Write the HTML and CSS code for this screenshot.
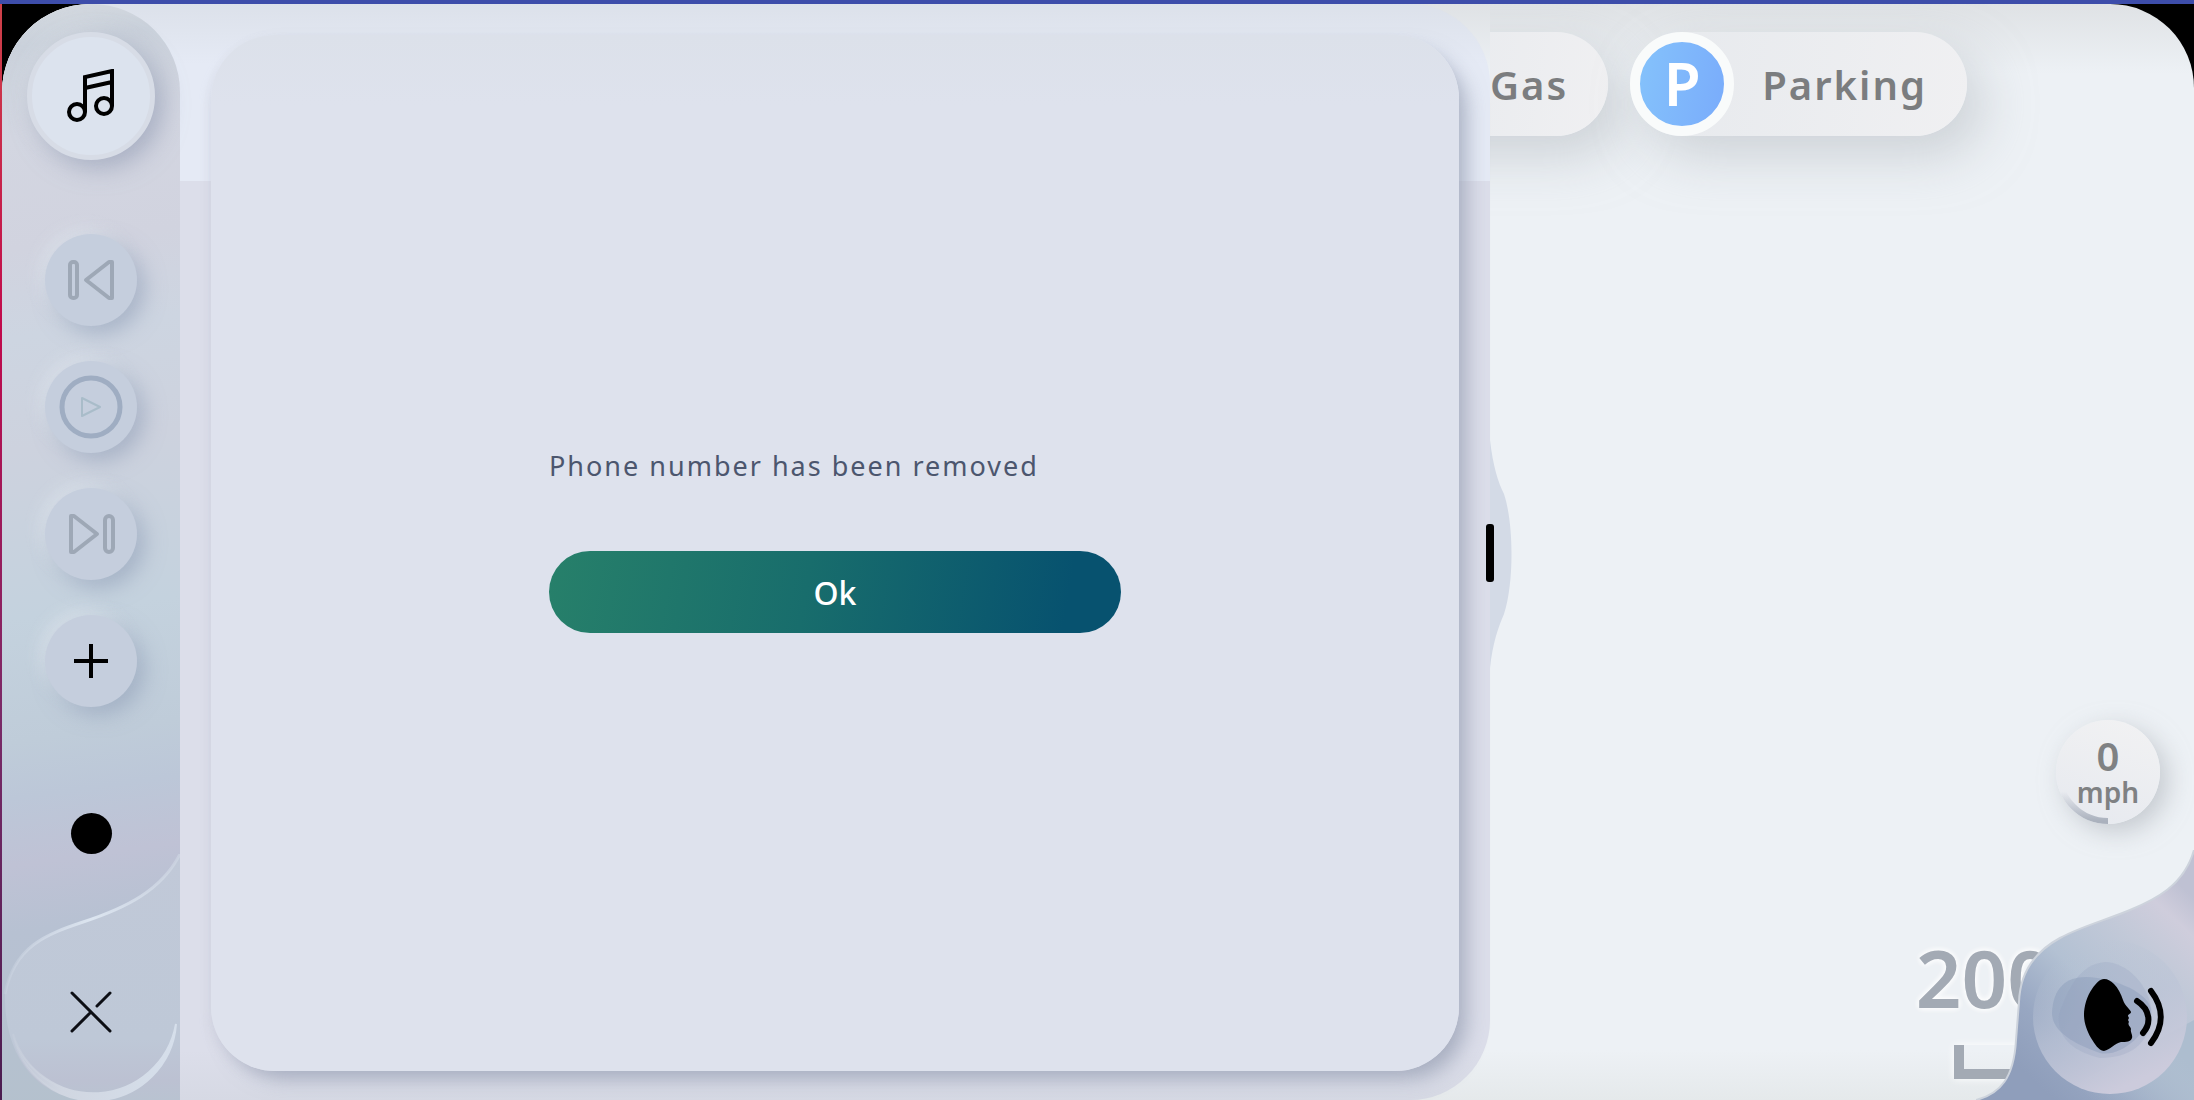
FILE: index.html
```html
<!DOCTYPE html>
<html lang="en">
<head>
  <meta charset="UTF-8" />
  <title>Phone</title>
  <meta name="viewport" content="width=device-width, initial-scale=1.0"/>
  <link rel="stylesheet" href="styles.css">
</head>
<body>
  <div class="screen">

    <!-- Media sidebar + panel -->
    <div class="drawer">
      <nav class="sidebar">
        <button class="round music" aria-label="Music">
          <svg width="48" height="54" viewBox="0 0 48 54" fill="none" stroke="#000" stroke-width="4">
            <circle cx="10" cy="43" r="8"/>
            <circle cx="37" cy="37" r="8"/>
            <path d="M18 43V8L45 2V37M18 19L45 13"/>
          </svg>
        </button>
        <button class="round" aria-label="Previous">
          <svg width="48" height="42" viewBox="0 0 48 42" fill="none" stroke="#9ea8b6" stroke-width="4" stroke-linejoin="round">
            <rect x="3" y="3" width="7" height="36" rx="3"/>
            <path d="M45 3V39H42L19 21L42 3Z"/>
          </svg>
        </button>
        <button class="round" aria-label="Play">
          <svg width="64" height="64" viewBox="0 0 64 64" fill="none" stroke-linejoin="round">
            <circle cx="32" cy="32" r="29" stroke="#9fadc2" stroke-width="5"/>
            <path d="M23 23L41 32L23 41Z" stroke="#a9bcc9" stroke-width="2"/>
          </svg>
        </button>
        <button class="round" aria-label="Next">
          <svg width="48" height="42" viewBox="0 0 48 42" fill="none" stroke="#9ea8b6" stroke-width="4" stroke-linejoin="round">
            <path d="M4 3V39H7L30 21L7 3Z"/>
            <rect x="38" y="3" width="8" height="36" rx="4"/>
          </svg>
        </button>
        <button class="round" aria-label="Add">
          <svg width="36" height="36" viewBox="0 0 36 36" stroke="#000" stroke-width="4">
            <path d="M18 1V35M1 18H35"/>
          </svg>
        </button>
        <button class="dot" aria-label="Home"></button>
        <button class="close" aria-label="Close">
          <svg width="178" height="246" viewBox="0 0 178 246" fill="none">
            <defs>
              <linearGradient id="closeFill" x1="0" y1="0" x2="0" y2="1">
                <stop offset="0" stop-color="#c1c9d8"/>
                <stop offset="0.75" stop-color="#bec8d7"/>
                <stop offset="0.92" stop-color="#bcc1d2"/>
                <stop offset="1" stop-color="#b9c3d1"/>
              </linearGradient>
              <linearGradient id="closeLine" x1="0" y1="0" x2="1" y2="0">
                <stop offset="0" stop-color="#d9e1ec" stop-opacity="0.2"/>
                <stop offset="0.5" stop-color="#dce5f0"/>
                <stop offset="1" stop-color="#d9e1ec" stop-opacity="0.4"/>
              </linearGradient>
              <linearGradient id="closeArc" x1="0" y1="0" x2="1" y2="0">
                <stop offset="0" stop-color="#ccd3df" stop-opacity="0.3"/>
                <stop offset="0.3" stop-color="#d0d6e1"/>
                <stop offset="1" stop-color="#d6dfeb"/>
              </linearGradient>
            </defs>
            <path d="M178 0C160 36 124 54 81 68C45 80 12 92 3 140C2 206 38 246 90 246H178Z" fill="url(#closeFill)"/>
            <path d="M178 0C160 36 124 54 81 68C45 80 12 92 3 140" stroke="url(#closeLine)" stroke-width="3"/>
            <path d="M11 180A82.4 82.4 0 0 0 174 170A84 84 0 0 1 11 180Z" fill="url(#closeArc)" stroke="url(#closeArc)" stroke-width="2"/>
            <path d="M70 139L108 177M108 139L95 152M88 159L70 177" stroke="#0c0e14" stroke-width="3" stroke-linecap="round"/>
          </svg>
        </button>
      </nav>

      <main class="panel">
        <section class="card">
          <div class="message">
            <p>Phone number has been removed</p>
            <button class="ok">Ok</button>
          </div>
        </section>
        <button class="handle" aria-label="Resize panel">
          <svg width="26" height="228" viewBox="0 0 26 228">
            <path d="M4 0C7 26 12 42 18 54C28 84 28 144 18 174C12 188 7 202 4 228Z" fill="#d3dae6"/>
            <rect x="0" y="84" width="8" height="58" rx="3" fill="#000"/>
          </svg>
        </button>
      </main>
    </div>

    <!-- Map -->
    <div class="map">
      <div class="places">
        <button class="place">Gas</button>
        <button class="place parking"><span class="badge">P</span>Parking</button>
      </div>
      <div class="speed">
        <svg class="speed-arc" width="104" height="104" viewBox="0 0 104 104" fill="none">
          <defs>
            <linearGradient id="arc" x1="0" y1="0" x2="0" y2="1">
              <stop offset="0.4" stop-color="#aab1bf" stop-opacity="0"/>
              <stop offset="1" stop-color="#aab1bd"/>
            </linearGradient>
          </defs>
          <path d="M3 52A49 49 0 0 0 52 101" stroke="url(#arc)" stroke-width="6"/>
        </svg>
        <span class="speed-value">0</span>
        <span class="speed-unit">mph</span>
      </div>
      <div class="map-footer">
        <div class="scale">
          <span>200</span>
          <div class="scale-bar"></div>
        </div>
        <button class="voice" aria-label="Voice assistant">
          <svg width="218" height="250" viewBox="0 0 218 250" fill="none">
            <defs>
              <linearGradient id="voiceFill" x1="0.95" y1="0.15" x2="0.3" y2="0.95">
                <stop offset="0" stop-color="#bfc1d3"/>
                <stop offset="0.12" stop-color="#cfcddc"/>
                <stop offset="0.3" stop-color="#c2c9d8"/>
                <stop offset="0.55" stop-color="#b3c1d3"/>
                <stop offset="0.8" stop-color="#98a7c2"/>
                <stop offset="1" stop-color="#8f9ebb"/>
              </linearGradient>
              <linearGradient id="voiceEdge" x1="0.3" y1="1" x2="1" y2="0.6">
                <stop offset="0" stop-color="#adbdcf" stop-opacity="0"/>
                <stop offset="1" stop-color="#adbdcf"/>
              </linearGradient>
              <linearGradient id="voiceDisc" x1="0.2" y1="0.1" x2="0.6" y2="0.95">
                <stop offset="0" stop-color="#b8c4d5" stop-opacity="0"/>
                <stop offset="0.5" stop-color="#bdc5d7" stop-opacity="0.7"/>
                <stop offset="1" stop-color="#cccbdc"/>
              </linearGradient>
            </defs>
            <path d="M218 0C208 36 178 50 154 60C130 70 104 77 84 88C60 101 44 122 43 152L40 190C38 228 24 244 0 250H218Z" fill="url(#voiceFill)"/>
            <path d="M218 170V250H70Z" fill="url(#voiceEdge)"/>
            <path d="M218 0C208 36 178 50 154 60C130 70 104 77 84 88C60 101 44 122 43 152L40 190C38 228 24 244 0 250" stroke="#cdd3dc" stroke-width="2"/>
            <circle cx="134" cy="167" r="77" fill="url(#voiceDisc)"/>
            <path d="M76 163C77 138 90 127 110 127C140 128 176 144 175 162C174 180 146 208 124 203C104 196 76 184 76 163Z" fill="#7f93b3" fill-opacity="0.35"/>
            <path d="M129 112C150 112 174 134 176 164C174 194 154 208 124 208C98 202 80 188 83 164C92 138 104 114 129 112Z" fill="#8c9dbb" fill-opacity="0.22"/>
            <path d="M128 129C132 129 135 131 138 134C142 138 145 144 147 150C149 156 155 160 155 162C155 164 152 164 152 166L153 168L152 170L153 172C151 175 155 177 155 179C154 182 157 185 156 188C155 192 150 192 145 192C139 193 134 200 128 201C122 200 119 194 115 188C111 181 108 173 108 165C108 156 111 146 116 139C120 133 124 129 128 129Z" fill="#000"/>
            <path d="M161 151C175 160 175 174 167 183M175 141C188 158 188 176 175 193" stroke="#000" stroke-width="6" stroke-linecap="round"/>
          </svg>
        </button>
      </div>
    </div>

  </div>
</body>
</html>
```
FILE: styles.css
```css
* {
  box-sizing: border-box;
}

body {
  margin: 0;
  height: 100vh;
  padding: 4px 0 0 2px;
  font-family: "Noto Sans", "Open Sans", sans-serif;
  background:
    linear-gradient(#3d4daa, #3d4daa) 0 0 / 100% 4px no-repeat,
    linear-gradient(#d0434a, #c00a4c 30%, #7a2a68 65%, #4a1c50) 0 0 / 2px 100% no-repeat,
    #000;
}

button {
  border: none;
  padding: 0;
  margin: 0;
  background: none;
  font-family: inherit;
  cursor: pointer;
}

svg {
  display: block;
}

.screen {
  display: flex;
  height: 100%;
  overflow: hidden;
  border-radius: 88px 84px 0 0;
  background: linear-gradient(#dfe2e5, #edf1f5 70px, #edf1f5 calc(100% - 50px), #e5e9eb);
}

.drawer {
  position: relative;
  z-index: 1;
  display: flex;
  flex: 1488;
  border-radius: 0 80px 80px 0;
  background:
    linear-gradient(#dce1ea, #e5eaf5 60px) 0 0 / 100% 177px no-repeat,
    linear-gradient(#dcdeea calc(100% - 50px), #d6d9e4);
}

/* Sidebar */
.sidebar {
  display: flex;
  flex-direction: column;
  align-items: center;
  gap: 35px;
  width: 178px;
  padding-top: 28px;
  border-radius: 88px 88px 0 0;
  background: linear-gradient(172deg, #d5dae0, #cad1db 4%, #d3d6e1 12%, #d1d3df 22%, #cdd5e1 30%, #cdd2de 40%, #c4d2de 55%, #bfccd9 66%, #bcc7d8 71%, #bfc2d5 77%, #b7c1d2 83%, #b4c1cd);
}

.round {
  display: flex;
  align-items: center;
  justify-content: center;
  flex-shrink: 0;
  width: 92px;
  height: 92px;
  border-radius: 50%;
  background: #c5cedd;
  box-shadow: 8px 8px 20px rgba(140, 155, 180, 0.55), -6px -6px 16px rgba(225, 231, 238, 0.6);
}

.music {
  width: 128px;
  height: 128px;
  margin-bottom: 39px;
  border: 5px solid #d7dce6;
  background: #dce3ee;
  box-shadow: 8px 8px 24px rgba(140, 150, 175, 0.6), -6px -6px 20px rgba(225, 230, 236, 0.4);
}

.dot {
  flex-shrink: 0;
  width: 41px;
  height: 41px;
  margin-top: 71px;
  margin-bottom: -36px;
  border-radius: 50%;
  background: #000;
}

.close {
  margin-top: auto;
}

/* Panel */
.panel {
  position: relative;
  display: flex;
  flex: 1;
  padding: 31px 31px 29px;
}

.card {
  display: flex;
  flex: 1;
  align-items: center;
  justify-content: center;
  padding-bottom: 26px;
  border-radius: 64px;
  background: linear-gradient(#dce1ea, #dee2ed 70px);
  box-shadow: 12px 12px 20px -4px rgba(150, 158, 178, 0.7), -2px 6px 10px rgba(200, 202, 218, 0.4);
}

.message {
  width: 572px;
}

.message p {
  margin: 0 0 66px;
  font-size: 27px;
  line-height: 38px;
  letter-spacing: 2px;
  color: #4c566e;
}

.ok {
  width: 100%;
  height: 82px;
  border-radius: 41px;
  font-size: 32px;
  font-weight: 500;
  color: #fff;
  background: linear-gradient(100deg, #27806a, #186d6c 45%, #07526f 90%);
}

.handle {
  position: absolute;
  top: 436px;
  right: -22px;
}

/* Map */
.map {
  display: flex;
  flex: 704;
  flex-direction: column;
  align-items: flex-end;
  min-width: 0;
  overflow: hidden;
}

.places {
  display: flex;
  gap: 22px;
  padding: 28px 227px 0 0;
}

.place {
  display: flex;
  align-items: center;
  gap: 28px;
  height: 104px;
  padding: 0 40px 0 112px;
  border-radius: 52px;
  font-size: 40px;
  font-weight: 600;
  letter-spacing: 2px;
  color: #7b7d7f;
  background: linear-gradient(100deg, #e6e9ed, #f0f0f2);
  box-shadow: 16px 20px 50px rgba(175, 182, 188, 0.5);
}

.parking {
  padding-left: 0;
}

.badge {
  width: 104px;
  height: 104px;
  border: 10px solid #f9fbfb;
  border-radius: 50%;
  font-size: 60px;
  line-height: 82px;
  letter-spacing: 0;
  text-align: center;
  color: #fff;
  background: linear-gradient(100deg, #86c5fb, #78a9fb) border-box;
}

.speed {
  position: relative;
  display: flex;
  flex-direction: column;
  align-items: center;
  justify-content: center;
  width: 104px;
  height: 104px;
  margin: auto 34px 26px 0;
  border-radius: 50%;
  font-weight: 600;
  color: #7f8183;
  background: linear-gradient(20deg, #e6e9ef, #f2f2f3);
  box-shadow: 8px 8px 24px rgba(165, 172, 178, 0.55);
}

.speed-arc {
  position: absolute;
  top: 0;
  left: 0;
}

.speed-value {
  font-size: 40px;
  line-height: 40px;
}

.speed-unit {
  font-size: 28px;
  line-height: 32px;
}

.map-footer {
  position: relative;
  display: flex;
  align-items: flex-end;
  height: 250px;
  padding: 0 141px 21px 0;
}

.scale {
  font-size: 80px;
  font-weight: 600;
  line-height: 88px;
  color: #a3aab4;
  text-shadow: 0 0 6px #fff, 0 0 6px #fff;
}

.scale-bar {
  height: 34px;
  margin: 24px 0 0 38px;
  border: solid #a3aab4;
  border-width: 0 0 10px 10px;
  box-shadow: 0 0 8px #fff;
}

.voice {
  position: absolute;
  right: 0;
  bottom: 0;
}
```
